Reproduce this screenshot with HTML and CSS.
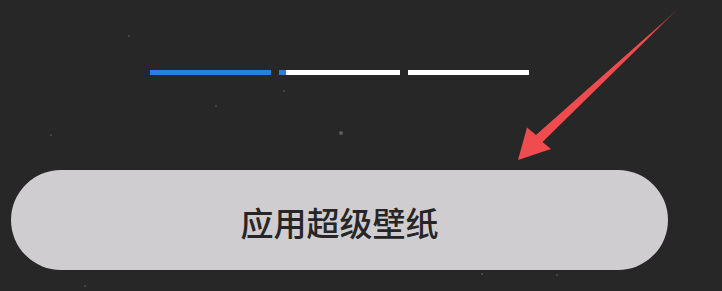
FILE: index.html
```html
<!DOCTYPE html>
<html lang="zh-CN">
<head>
    <meta charset="UTF-8">
    <meta name="viewport" content="width=device-width, initial-scale=1.0">
    <title>应用超级壁纸</title>
    <link rel="stylesheet" href="styles.css">
</head>
<body>
    <div id="screen">
        <div class="star" style="left:128px;top:35px"></div>
        <div class="star" style="left:283px;top:90px"></div>
        <div class="star" style="left:215px;top:105px"></div>
        <div class="star" style="left:50px;top:134px"></div>
        <div class="star big" style="left:339px;top:131px"></div>
        <div class="star" style="left:84px;top:285px"></div>
        <div class="star" style="left:481px;top:273px"></div>
        <div class="star" style="left:556px;top:274px"></div>

        <div id="panel">
            <div id="pager">
                <div class="page active"></div>
                <div class="page loading"></div>
                <div class="page"></div>
            </div>
            <button id="apply">应用超级壁纸</button>
        </div>

        <svg id="arrow" width="722" height="291" viewBox="0 0 722 291">
            <defs>
                <linearGradient id="fade" x1="678" y1="9" x2="518" y2="160" gradientUnits="userSpaceOnUse">
                    <stop offset="0" stop-color="#ef4a4e" stop-opacity="0.4"/>
                    <stop offset="0.2" stop-color="#ef4a4e"/>
                    <stop offset="1" stop-color="#f04c50"/>
                </linearGradient>
            </defs>
            <polygon points="678,9 542.5,142 551,149 518,160 527,127.5 536,135" fill="url(#fade)"/>
        </svg>
    </div>
</body>
</html>
```

FILE: styles.css
```css
body {
    margin: 0;
    background: #272727;
    font-family: "Noto Sans CJK SC", "Noto Sans", sans-serif;
    overflow: hidden;
}

#screen {
    position: relative;
    width: 722px;
    height: 291px;
}

#panel {
    width: 657px;
    margin-left: 11px;
    padding-top: 70px;
    display: flex;
    flex-direction: column;
    align-items: center;
}

#pager {
    display: flex;
    gap: 8px;
}

.page {
    width: 121px;
    height: 5px;
    background: #ffffff;
}

.page.active {
    background: #2a7de1;
}

.page.loading {
    background: linear-gradient(90deg, #2a7de1 0 7px, #ffffff 7px);
}

#apply {
    margin-top: 95px;
    width: 657px;
    height: 100px;
    border: none;
    border-radius: 50px;
    background: #cfcdcf;
    color: #262626;
    font-family: "Noto Sans CJK SC", "Noto Sans", sans-serif;
    font-size: 33px;
    font-weight: 500;
    padding: 4px 0 0 0;
}

.star {
    position: absolute;
    width: 2px;
    height: 2px;
    border-radius: 50%;
    background: #4d4d4d;
}

.star.big {
    width: 4px;
    height: 4px;
    background: #5c5c5c;
}

#arrow {
    position: absolute;
    left: 0;
    top: 0;
    pointer-events: none;
}
```
